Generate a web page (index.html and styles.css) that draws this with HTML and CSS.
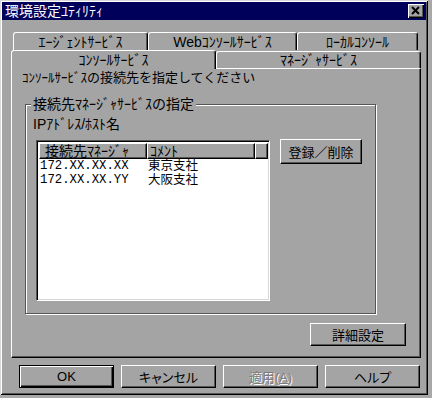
FILE: index.html
```html
<!DOCTYPE html>
<html>
<head>
  <meta charset="UTF-8">
  <title>環境設定ﾕﾃｨﾘﾃｨ</title>
  <link rel="stylesheet" href="styles.css">
</head>
<body>

  <div class="window">
    <div class="titlebar">
      <span class="title">環境設定ﾕﾃｨﾘﾃｨ</span>
      <span class="close">
        <svg width="14" height="12" viewBox="0 0 14 12">
          <path d="M3 2 L10 9 M10 2 L3 9" stroke="#000" stroke-width="2" fill="none"/>
        </svg>
      </span>
    </div>

    <div class="content">
      <div class="tab-row back">
        <div class="tab tab-agent">ｴｰｼﾞｪﾝﾄｻｰﾋﾞｽ</div>
        <div class="tab tab-web">Webｺﾝｿｰﾙｻｰﾋﾞｽ</div>
        <div class="tab tab-local">ﾛｰｶﾙｺﾝｿｰﾙ</div>
      </div>
      <div class="tab-row front">
        <div class="tab tab-half active">ｺﾝｿｰﾙｻｰﾋﾞｽ</div>
        <div class="tab tab-half">ﾏﾈｰｼﾞｬｻｰﾋﾞｽ</div>
      </div>

      <div class="panel">
        <p class="hint">ｺﾝｿｰﾙｻｰﾋﾞｽの接続先を指定してください</p>

        <div class="group">
          <div class="group-title">接続先ﾏﾈｰｼﾞｬｻｰﾋﾞｽの指定</div>
          <div class="field-label">IPｱﾄﾞﾚｽ/ﾎｽﾄ名</div>
          <div class="list-row">
            <div class="list">
              <div class="list-head">
                <div class="col col-manager">接続先ﾏﾈｰｼﾞｬ</div>
                <div class="col col-comment">ｺﾒﾝﾄ</div>
                <div class="col col-rest"></div>
              </div>
              <div class="list-body">
                <div class="row">
                  <span class="cell-ip">172.XX.XX.XX</span>
                  <span class="cell-comment">東京支社</span>
                </div>
                <div class="row">
                  <span class="cell-ip">172.XX.XX.YY</span>
                  <span class="cell-comment">大阪支社</span>
                </div>
              </div>
            </div>
            <button class="btn btn-register">登録／削除</button>
          </div>
        </div>

        <div class="panel-foot">
          <button class="btn btn-detail">詳細設定</button>
        </div>
      </div>

      <div class="footer">
        <button class="btn btn-wide default">OK</button>
        <button class="btn btn-wide">キャンセル</button>
        <button class="btn btn-wide disabled">適用(<u>A</u>)</button>
        <button class="btn btn-wide">ヘルプ</button>
      </div>
    </div>
  </div>

</body>
</html>
```

FILE: styles.css
```css
body {
  margin: 0;
  padding: 0;
  background-color: #a8a8a8;
  font-family: "Liberation Sans", "Noto Sans CJK JP", sans-serif;
  font-size: 14px;
  color: #000000;
}

.window {
  width: 428px;
  height: 395px;
  box-sizing: border-box;
  padding: 2px;
  background-color: #a4a4a4;
  box-shadow: inset 1px 1px 0 #d8d8d8, inset -1px -1px 0 #000000,
              inset 2px 2px 0 #ffffff, inset -2px -2px 0 #555555;
}

/* title bar */
.titlebar {
  display: flex;
  align-items: center;
  height: 18px;
  padding-left: 3px;
  background-color: #00005a;
  color: #ffffff;
}

.title {
  line-height: 18px;
}

.close {
  display: flex;
  align-items: center;
  justify-content: center;
  width: 16px;
  height: 14px;
  box-sizing: border-box;
  margin-left: auto;
  margin-right: 2px;
  background-color: #a4a4a4;
  box-shadow: inset 1px 1px 0 #ffffff, inset -1px -1px 0 #000000, inset -2px -2px 0 #555555;
}

.content {
  padding: 12px 0 0 9px;
}

/* tabs */
.tab-row {
  display: flex;
  height: 18px;
}

.tab-row.back {
  padding-left: 2px;
}

.tab {
  display: flex;
  align-items: center;
  justify-content: center;
  box-sizing: border-box;
  height: 18px;
  background-color: #a4a4a4;
  border-top: 1px solid #ffffff;
  border-left: 1px solid #ffffff;
  border-right: 1px solid #000000;
  border-radius: 3px 3px 0 0;
  box-shadow: inset -1px 0 0 #555555;
  line-height: 1;
}

.tab-agent { width: 135px; }
.tab-web { width: 149px; }
.tab-local { width: 121px; }

.tab-half {
  width: 205px;
  height: 17px;
  margin-top: 1px;
}

.tab.active {
  position: relative;
  z-index: 1;
  height: 19px;
  margin-top: 0;
}

/* panel */
.panel {
  width: 410px;
  height: 290px;
  box-sizing: border-box;
  padding: 2px 0 0 10px;
  background-color: #a4a4a4;
  border-top: 1px solid #ffffff;
  border-left: 1px solid #ffffff;
  border-right: 1px solid #000000;
  border-bottom: 1px solid #000000;
  box-shadow: inset -1px -1px 0 #555555;
}

.hint {
  margin: 0;
  font-size: 13px;
  line-height: 14px;
}

.group {
  width: 351px;
  height: 210px;
  box-sizing: border-box;
  margin: 19px 0 0 3px;
  border: 1px solid #555555;
  box-shadow: inset 1px 1px 0 #ffffff, 1px 1px 0 #ffffff;
}

.group-title {
  width: max-content;
  margin: -8px 0 0 5px;
  padding: 0 2px;
  background-color: #a4a4a4;
  line-height: 14px;
}

.field-label {
  margin: 6px 0 0 7px;
  line-height: 14px;
}

.list-row {
  display: flex;
  align-items: flex-start;
  margin: 9px 0 0 10px;
}

/* list view */
.list {
  width: 234px;
  height: 161px;
  box-sizing: border-box;
  padding: 1px;
  background-color: #ffffff;
  border: 1px solid;
  border-color: #555555 #ffffff #ffffff #555555;
  box-shadow: inset 1px 1px 0 #000000, inset -1px -1px 0 #d8d8d8;
}

.list-head {
  display: flex;
  height: 16px;
  margin: 1px 0 0 1px;
}

.col {
  box-sizing: border-box;
  height: 16px;
  padding-left: 5px;
  background-color: #a4a4a4;
  border-top: 1px solid #ffffff;
  border-left: 1px solid #ffffff;
  border-right: 1px solid #000000;
  border-bottom: 1px solid #000000;
  box-shadow: inset -1px -1px 0 #555555;
  line-height: 14px;
}

.col-manager { width: 108px; }
.col-comment { width: 108px; padding-left: 2px; }
.col-rest { flex: 1; }

.row {
  display: flex;
  height: 14px;
  line-height: 14px;
}

.cell-ip {
  width: 107px;
  padding-left: 2px;
  font-family: "Liberation Mono", "DejaVu Sans Mono", monospace;
  font-size: 12.3px;
}

.cell-comment {
  padding-left: 1px;
  font-size: 12.5px;
}

/* buttons */
.btn {
  box-sizing: border-box;
  height: 23px;
  padding: 0;
  background-color: #a4a4a4;
  border: 1px solid;
  border-color: #ffffff #000000 #000000 #ffffff;
  box-shadow: inset -1px -1px 0 #555555;
  font-family: "Liberation Sans", "Noto Sans CJK JP", sans-serif;
  font-size: 13px;
  font-feature-settings: "palt";
  color: #000000;
}

.btn-register {
  width: 82px;
  height: 25px;
  margin: -1px 0 0 10px;
}

.panel-foot {
  display: flex;
  justify-content: flex-end;
  margin: 9px 14px 0 0;
}

.btn-detail {
  width: 96px;
}

.footer {
  display: flex;
  gap: 7px;
  margin-top: 7px;
  padding-left: 8px;
}

.btn-wide {
  width: 95px;
}

.btn.default {
  border: 1px solid #000000;
  box-shadow: inset 1px 1px 0 #ffffff, inset -1px -1px 0 #000000, inset -2px -2px 0 #555555;
}

.btn.disabled {
  color: #7c7c7c;
  text-shadow: 1px 1px 0 #ffffff;
}
```
